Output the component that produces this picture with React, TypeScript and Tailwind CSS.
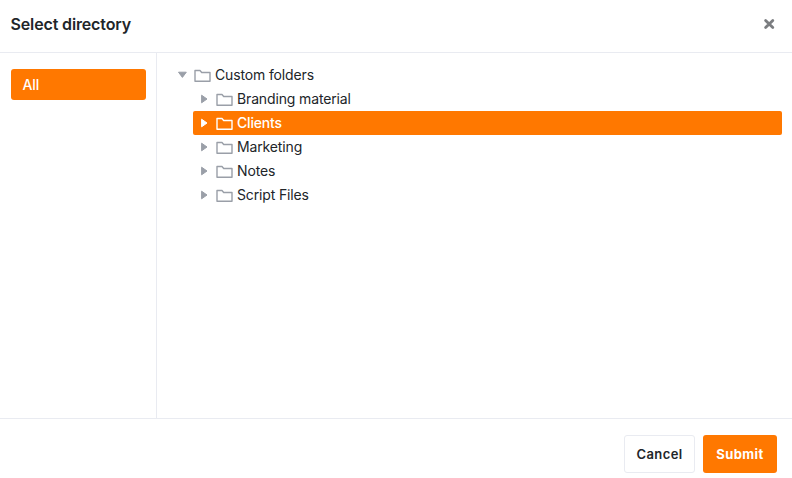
import React from "react";

const folders = ["Branding material", "Clients", "Marketing", "Notes", "Script Files"];

function FolderIcon() {
  return (
    <svg className="h-[13px] w-[17px] shrink-0" viewBox="0 0 17 13" fill="none" stroke="currentColor" strokeWidth="1.4" strokeLinejoin="round">
      <path d="M1 1.5H6L7.7 3.5H16V12.3H1Z" />
    </svg>
  );
}

function Caret({ open = false }: { open?: boolean }) {
  return (
    <svg className="h-[10px] w-[10px] shrink-0" viewBox="0 0 10 10" fill="currentColor" stroke="currentColor" strokeWidth="1" strokeLinejoin="round">
      {open ? <path d="M1.5 2.2H9.3L5.4 7.4Z" /> : <path d="M2.6 1.2L8 5L2.6 8.8Z" />}
    </svg>
  );
}

function TreeRow({ label, selected = false, open = false }: { label: string; selected?: boolean; open?: boolean }) {
  return (
    <div className={`flex h-6 items-center rounded-xs pl-[6px] text-[14px] leading-6 ${selected ? "bg-[#ff7800] font-medium tracking-[-0.2px] text-white" : "tracking-[-0.14px] text-[#212529]"}`}>
      <span className={`flex items-center gap-[7px] pr-[4px] ${selected ? "text-white" : "text-[#9a9fa8]"}`}>
        <Caret open={open} />
        <span className="pt-px">
          <FolderIcon />
        </span>
      </span>
      <span>{label}</span>
    </div>
  );
}

export default function App() {
  return (
    <div className="flex h-[478px] w-[792px] flex-col overflow-hidden bg-white font-['Inter',sans-serif] text-[#212529]">
      <header className="flex h-[53px] shrink-0 items-center justify-between border-b border-[#e9ebf1] pr-[17px] pb-[5px] pl-[10.5px]">
        <h1 className="text-[16px] leading-6 font-semibold tracking-[-0.14px]">Select directory</h1>
        <button aria-label="Close" className="text-[#7b7d80]">
          <svg className="h-3 w-3" viewBox="0 0 12 12" stroke="currentColor" strokeWidth="2.8" strokeLinecap="round">
            <path d="M2.6 2.4L9.8 9.6M9.8 2.4L2.6 9.6" />
          </svg>
        </button>
      </header>
      <main className="flex h-[365px] shrink-0">
        <aside className="w-[157px] shrink-0 border-r border-[#e9ebf1] pt-4 pr-[10px] pl-[11px]">
          <div className="flex h-[31px] items-center rounded-[3px] bg-[#ff7800] pl-[11.5px] text-[14px] font-medium tracking-[-0.14px] text-white">All</div>
        </aside>
        <section className="flex-1 pt-[10px] pr-[10px] pl-[14px]">
          <TreeRow label="Custom folders" open />
          <div className="pl-[22px]">
            {folders.map((name) => (
              <TreeRow key={name} label={name} selected={name === "Clients"} />
            ))}
          </div>
        </section>
      </main>
      <footer className="flex flex-1 items-start justify-end gap-2 border-t border-[#e9ebf1] pt-4 pr-[15px]">
        <button className="h-[38px] w-[71px] rounded-[3px] border border-[#e9ebf1] pt-[2px] text-[13px] font-semibold tracking-[0.4px]">Cancel</button>
        <button className="h-[38px] w-[74px] rounded-[3px] bg-[#ff7800] pt-[2px] text-[13px] font-bold tracking-[0.4px] text-white">Submit</button>
      </footer>
    </div>
  );
}
